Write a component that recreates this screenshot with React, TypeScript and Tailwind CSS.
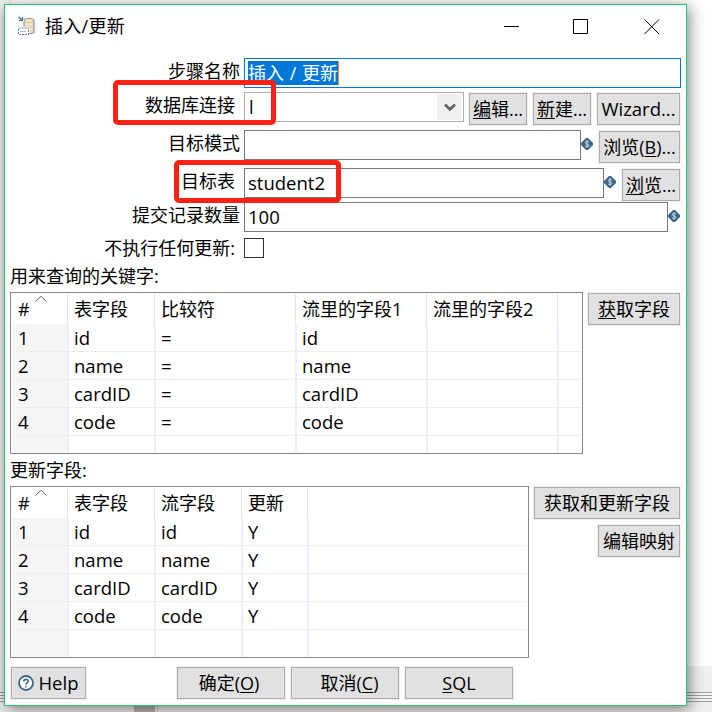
import * as React from "react";
import { clsx } from "clsx";

interface Column {
  title: string;
  className: string;
}

const KEY_COLUMNS: Column[] = [
  { title: "表字段", className: "w-[87px]" },
  { title: "比较符", className: "w-[141px]" },
  { title: "流里的字段1", className: "w-[131px]" },
  { title: "流里的字段2", className: "w-[131px]" },
  { title: "", className: "flex-1" },
];

const KEY_ROWS = [
  ["id", "=", "id", "", ""],
  ["name", "=", "name", "", ""],
  ["cardID", "=", "cardID", "", ""],
  ["code", "=", "code", "", ""],
];

const UPDATE_COLUMNS: Column[] = [
  { title: "表字段", className: "w-[87px]" },
  { title: "流字段", className: "w-[87px]" },
  { title: "更新", className: "w-[66px]" },
  { title: "", className: "flex-1" },
];

const UPDATE_ROWS = [
  ["id", "id", "Y", ""],
  ["name", "name", "Y", ""],
  ["cardID", "cardID", "Y", ""],
  ["code", "code", "Y", ""],
];

function Button({ children, className }: { children: React.ReactNode; className?: string }) {
  return (
    <button
      type="button"
      className={clsx(
        "flex h-8 shrink-0 items-center justify-center whitespace-nowrap border border-[#adadad] bg-[#e1e1e1] shadow-[0_0_0_1px_#f0f0f0]",
        className,
      )}
    >
      {children}
    </button>
  );
}

function Key({ children }: { children: React.ReactNode }) {
  return <span className="underline decoration-1 underline-offset-2">{children}</span>;
}

function Row({
  label,
  className,
  labelClassName = "pr-1",
  children,
}: {
  label: string;
  className: string;
  labelClassName?: string;
  children: React.ReactNode;
}) {
  return (
    <div className={clsx("flex items-start", className)}>
      <span className={clsx("w-[239px] shrink-0 text-right leading-[26px]", labelClassName)}>
        {label}
      </span>
      {children}
    </div>
  );
}

function Field({ value, className }: { value?: string; className: string }) {
  return (
    <div
      className={clsx(
        "flex h-[30px] shrink-0 items-center border border-[#7a7a7a] pl-[3px] text-[18.5px]",
        className,
      )}
    >
      {value}
    </div>
  );
}

function VariableMark() {
  return (
    <svg viewBox="0 0 12 12" className="mt-2 h-3 w-3 shrink-0">
      <path d="M5 0H7L12 5V7L7 12H5L0 7V5Z" fill="#3d6587" />
      <path
        d="M7.9 4.2C7.4 3.3 4.3 3.1 4.3 4.7S7.9 5.8 7.9 7.4 4.6 8.7 4 7.7M6 2.2V9.8"
        fill="none"
        stroke="#dfe8ee"
        strokeWidth="0.9"
      />
    </svg>
  );
}

function StepIcon() {
  return (
    <svg viewBox="0 0 18 20" className="mt-[11px] h-5 w-[18px]">
      <path d="M6 4.5C6 1.8 16 1.8 16 4.5V16C16 18 6 18 6 16Z" fill="#f8dfc0" stroke="#8195a6" strokeWidth="1.2" />
      <path d="M6 5C8 7 14 7 16 5M6 10C8 11.5 14 11.5 16 10" fill="none" stroke="#b9b7ae" strokeWidth="0.8" />
      <path d="M0 0H6V6H0Z" fill="#fff" />
      <path d="M0 10.5H11.5V20H0Z" fill="#fff" />
      <path d="M0.5 12H10.5V18.5H0.5Z" fill="none" stroke="#55809f" strokeDasharray="2 1" />
      <path d="M2.5 15.5H8.5" stroke="#55809f" strokeDasharray="1 1" />
      <path d="M0.5 0.8 4.3 4.2M4.6 1V4.5H1" fill="none" stroke="#3f6687" strokeWidth="1.2" />
    </svg>
  );
}

function Grid({ columns, rows, className }: { columns: Column[]; rows: string[][]; className: string }) {
  const body = [...rows, columns.map(() => "")];
  return (
    <div className={clsx("flex flex-col overflow-hidden border border-[#828790] p-px", className)}>
      <div className="flex h-[30px] shrink-0">
        <div className="flex w-[55px] shrink-0 items-start pl-1.5">
          <span className="w-[11px] leading-[30px]">#</span>
          <svg viewBox="0 0 12 7" className="ml-[6px] mt-[1px] h-[7px] w-3">
            <path d="M0.7 6.5 6 1.2 11.3 6.5" fill="none" stroke="#555" />
          </svg>
        </div>
        {columns.map((col, i) => (
          <div
            key={i}
            className={clsx(
              "shrink-0 whitespace-nowrap border-l border-[#e5e5e5] pl-1.5 leading-[30px]",
              col.className,
            )}
          >
            {col.title}
          </div>
        ))}
      </div>
      {body.map((cells, r) => (
        <div key={r} className="flex h-7 shrink-0 text-[18.5px]">
          <div className="w-[55px] shrink-0 border-b border-[#ededed] bg-[#f6f6f6] pl-1.5 leading-[28px]">
            {r < rows.length ? r + 1 : ""}
          </div>
          {cells.map((cell, c) => (
            <div key={c} className={clsx("flex shrink-0", columns[c].className)}>
              <span className="w-0.5 shrink-0 bg-[#ebf0f8]" />
              <span className="flex-1 border-b border-[#ededed] pl-[5px] leading-[28px]">{cell}</span>
            </div>
          ))}
        </div>
      ))}
    </div>
  );
}

// Slice of the application window that shows behind the dialog
function Backdrop() {
  return (
    <div className="absolute inset-0 flex flex-col">
      <div className="flex h-[666px]">
        <div className="w-3 bg-[#f0f0f0]" />
        <div className="flex-1 bg-white" />
      </div>
      <div className="h-[26px] bg-[#f0f0f0]" />
      <div className="flex h-2.5 flex-col justify-between border-y border-[#a0a0a0] bg-[#f5f5f5] py-0.5">
        <div className="h-px bg-[#a0a0a0]" />
        <div className="h-px bg-[#a0a0a0]" />
      </div>
      <div className="flex flex-1 bg-[#f0f0f0] pl-[134px]">
        <div className="w-[21px] bg-[#b5b5b5]" />
        <div className="ml-0.5 w-px bg-[#d0d0d0]" />
      </div>
    </div>
  );
}

export default function App() {
  return (
    <div className="relative h-[712px] w-[712px] overflow-hidden pl-1 pt-1 font-['Open_Sans','Noto_Sans_CJK_SC',sans-serif] text-[18px] text-black">
      <Backdrop />
      <div className="relative flex h-[702px] w-[683px] flex-col border border-[#1ec878] bg-white shadow-[2px_3px_14px_rgba(0,0,0,0.5)]">
        <div className="flex h-[53px] shrink-0 items-start pl-[13px]">
          <StepIcon />
          <span className="ml-[9px] leading-[43px] tracking-[0.3px]">插入/更新</span>
          <svg viewBox="0 0 156 16" className="ml-auto mr-[26px] mt-[14px] h-4 w-[156px]" fill="none" stroke="#000">
            <path d="M0 7.5H15" />
            <path d="M69.5 0.5H83.5V14.5H69.5Z" />
            <path d="M140.5 0.5 155 15M155 0.5 140.5 15" />
          </svg>
        </div>

        <Row label="步骤名称" className="h-[34px]">
          <div className="flex h-[30px] w-[437px] items-center border border-[#0078d7] pl-[3px]">
            <span className="h-6 w-[91px] whitespace-nowrap border-r border-[#ff8728] bg-[#0078d7] leading-6 text-white [word-spacing:1px]">
              插入 / 更新
            </span>
          </div>
        </Row>
        <Row label="数据库连接" className="h-[38px]" labelClassName="pr-[9px]">
          <div className="flex h-[30px] w-[220px] shrink-0 items-center border border-[#adadb2] pl-1 pr-px">
            <span>l</span>
            <span className="ml-auto flex h-[26px] w-[25px] items-center justify-center bg-[#f0f0f0]">
              <svg viewBox="0 0 12 9" className="h-[9px] w-3">
                <path d="M1 1.5 6 6.5 11 1.5" fill="none" stroke="#606060" strokeWidth="2.6" />
              </svg>
            </span>
          </div>
          <Button className="ml-[5px] mt-px w-[58px]">
            <Key>编</Key>辑...
          </Button>
          <Button className="ml-1.5 mt-px w-[58px]">
            <Key>新</Key>建...
          </Button>
          <Button className="ml-1.5 mt-px w-[83px] text-[18.5px]">Wizard...</Button>
        </Row>
        <Row label="目标模式" className="h-[38px]">
          <Field className="w-[337px]" />
          <VariableMark />
          <Button className="ml-1.5 mt-px w-[81px]">
            浏览(<Key>B</Key>)...
          </Button>
        </Row>
        <Row label="目标表" className="h-[34px]" labelClassName="pr-[9px]">
          <Field value="student2" className="w-[360px]" />
          <VariableMark />
          <Button className="ml-1.5 mt-px w-[58px]">
            <Key>浏</Key>览...
          </Button>
        </Row>
        <Row label="提交记录数量" className="h-9">
          <Field value="100" className="w-[424px]" />
          <VariableMark />
        </Row>
        <Row label="不执行任何更新:" className="h-[25px]" labelClassName="-mt-[3px] pr-[9px]">
          <span className="h-5 w-5 border border-[#333]" />
        </Row>

        <div className="h-[29px] shrink-0 pl-[5px] leading-[26px]">用来查询的关键字:</div>
        <div className="flex h-[162px] shrink-0 items-start pl-[5px]">
          <Grid columns={KEY_COLUMNS} rows={KEY_ROWS} className="h-[162px] w-[573px]" />
          <Button className="ml-[5px] mt-px w-[92px]">
            <Key>获</Key>取字段
          </Button>
        </div>

        <div className="h-8 shrink-0 pl-[5px] leading-[32px]">更新字段:</div>
        <div className="flex h-[172px] shrink-0 items-start pl-[5px]">
          <Grid columns={UPDATE_COLUMNS} rows={UPDATE_ROWS} className="h-[172px] w-[519px]" />
          <div className="ml-[5px] mt-px flex flex-col items-end gap-1.5">
            <Button className="w-[146px]">获取和更新字段</Button>
            <Button className="w-[82px]">编辑映射</Button>
          </div>
        </div>

        <div className="mt-[9px] flex pl-1.5">
          <Button className="w-[75px] gap-1 text-[18.5px]">
            <svg viewBox="0 0 16 16" className="h-4 w-4" fill="none" stroke="#416788">
              <circle cx="8" cy="8" r="7" strokeWidth="1.8" fill="#fff" />
              <path d="M5.7 6.4C5.7 3.6 10.4 3.7 10.3 6.3 10.2 7.7 8 7.7 8 9.6M8 10.7V12.3" strokeWidth="1.6" />
            </svg>
            Help
          </Button>
          <Button className="ml-[91px] w-[108px] pr-1">
            确定(<Key>O</Key>)
          </Button>
          <Button className="ml-1.5 w-[108px] pl-[9px]">
            取消(<Key>C</Key>)
          </Button>
          <Button className="ml-1.5 w-[108px]">
            <Key>S</Key>QL
          </Button>
        </div>
      </div>

      {/* highlight frames around the two required settings */}
      <div className="absolute left-[113px] top-[80px] h-[45px] w-[163px] rounded-[5px] border-5 border-[#ff2113]" />
      <div className="absolute left-[174px] top-[160px] h-[43px] w-[167px] rounded-[5px] border-5 border-[#ff2113]" />
    </div>
  );
}
